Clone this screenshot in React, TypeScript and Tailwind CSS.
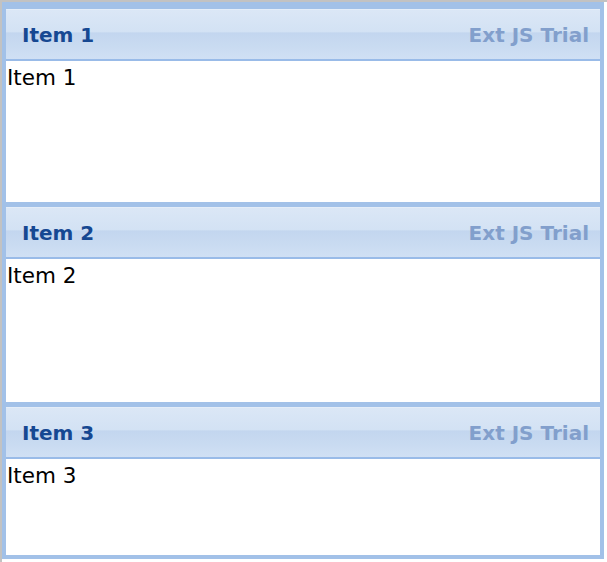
import React from "react";

const panels = [
	{ title: "Item 1", body: "Item 1", h: "h-[141px]" },
	{ title: "Item 2", body: "Item 2", h: "h-[143px]" },
	{ title: "Item 3", body: "Item 3", h: "h-[96px]" },
];

const Header = ({ title }: { title: string }) => (
	<div className="h-[52px] flex items-center justify-between pl-[16px] pr-[11px] border-t border-[#e4edf8] bg-[linear-gradient(to_bottom,#dbe7f6_0%,#d3e2f4_44%,#c3d6ef_47%,#c9dbf1_75%,#d0e0f4_100%)] border-b-2 border-b-[#99bbe8]">
		<span className="text-[20px] font-bold text-[#164892]">{title}</span>
		<span className="text-[20px] font-bold text-[#829fcc]">Ext JS Trial</span>
	</div>
);

export default function App() {
	return (
		<div
			className="w-[607px] h-[562px] bg-white border-t-2 border-l-2 border-[#c2c2c2]"
			style={{ fontFamily: '"DejaVu Sans", Verdana, sans-serif' }}
		>
			<div className="w-[602px] border-x-4 border-b-4 border-t-[7px] border-[#a2c1e8] bg-[#a2c1e8]">
				{panels.map((p, i) => (
					<div key={i} className={i > 0 ? "mt-[5px]" : ""}>
						<Header title={p.title} />
						<div className={`${p.h} bg-white pl-[1px] pt-[5px] text-[21.5px] leading-[24px] text-black`}>
							{p.body}
						</div>
					</div>
				))}
			</div>
		</div>
	);
}
